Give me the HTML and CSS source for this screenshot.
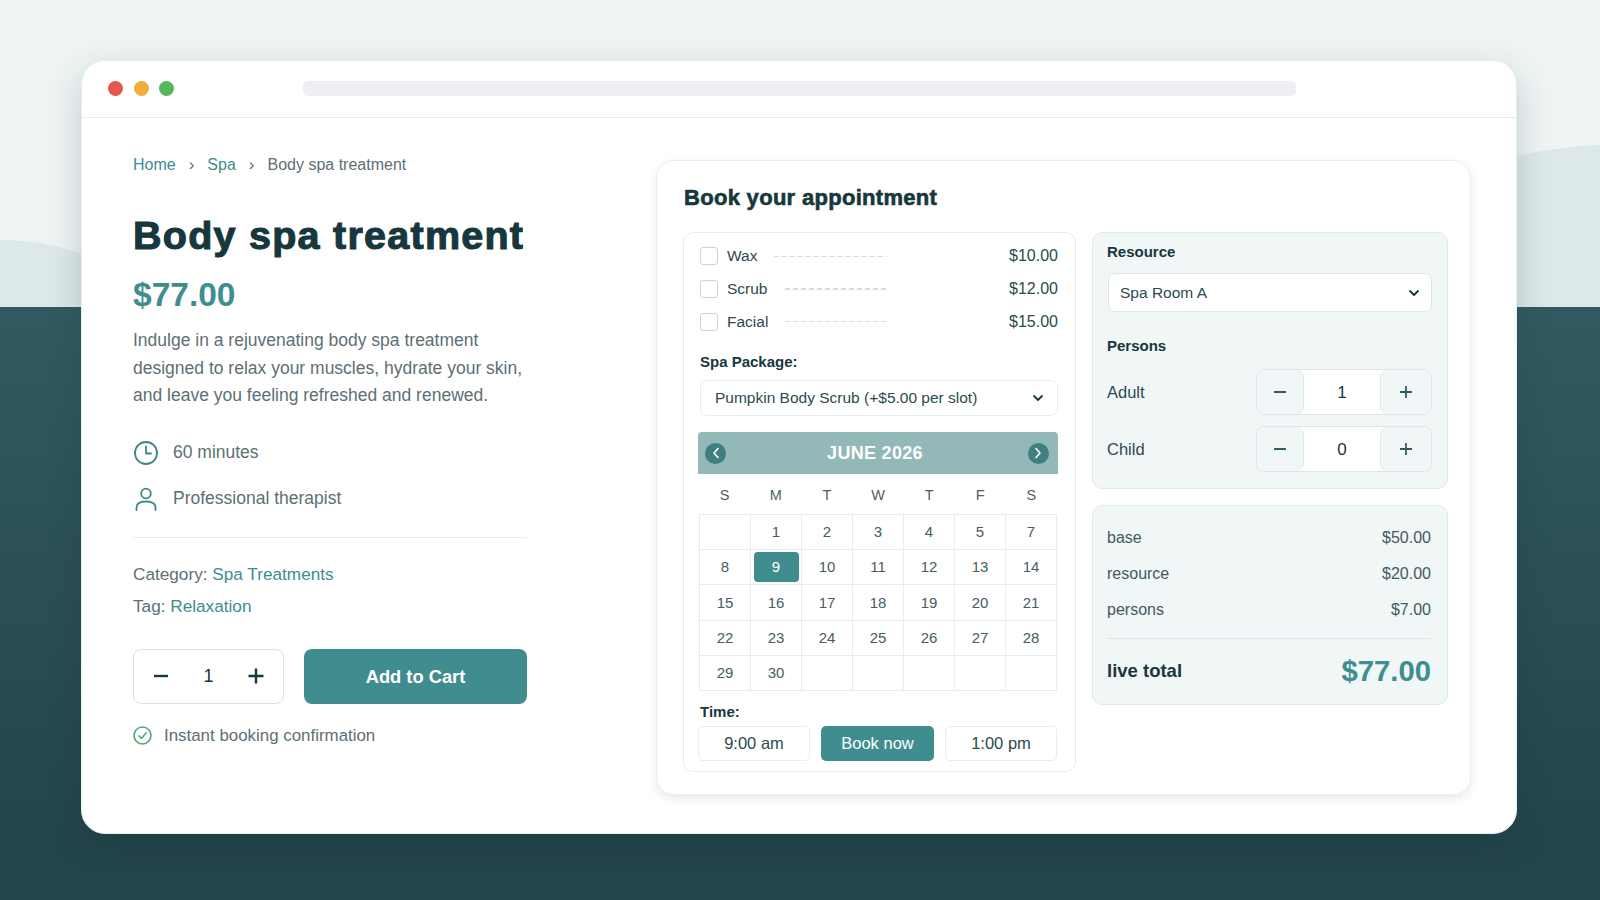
FILE: index.html
```html
<!DOCTYPE html>
<html lang="en">
<head>
    <meta charset="UTF-8">
    <title>Body spa treatment</title>
    <link rel="stylesheet" href="styles.css">
</head>
<body>
    <!-- backdrop hills -->
    <svg class="hills" width="1600" height="307" viewBox="0 0 1600 307">
        <path d="M0 240C40 240 70 248 100 262V307H0Z" fill="#dde8e9"/>
        <path d="M1500 160C1535 151 1570 146 1600 145V307H1500Z" fill="#dde8e9"/>
    </svg>
    <div class="window">
        <div class="titlebar">
            <span class="dot dot-red"></span>
            <span class="dot dot-amber"></span>
            <span class="dot dot-green"></span>
            <div class="urlbar"></div>
        </div>
        <main class="content">
            <section class="product">
                <nav class="crumbs">
                    <a href="#">Home</a>
                    <span class="sep">&#8250;</span>
                    <a href="#">Spa</a>
                    <span class="sep">&#8250;</span>
                    <span>Body spa treatment</span>
                </nav>
                <h1>Body spa treatment</h1>
                <div class="price">$77.00</div>
                <p class="desc">Indulge in a rejuvenating body spa treatment designed to relax your muscles, hydrate your skin, and leave you feeling refreshed and renewed.</p>
                <div class="fact fact-first">
                    <svg width="26" height="26" viewBox="0 0 26 26" fill="none" stroke="#3f8588" stroke-width="1.8" stroke-linecap="round" stroke-linejoin="round"><circle cx="13" cy="13" r="11"/><path d="M13 6.5V13.5H18"/></svg>
                    <span>60 minutes</span>
                </div>
                <div class="fact">
                    <svg width="26" height="26" viewBox="0 0 26 26" fill="none" stroke="#3f8588" stroke-width="1.8" stroke-linecap="round"><circle cx="13" cy="7.5" r="4.8"/><path d="M3.5 24V21.5C3.5 17.5 7 15.5 13 15.5S22.5 17.5 22.5 21.5V24"/></svg>
                    <span>Professional therapist</span>
                </div>
                <hr class="rule">
                <div class="meta">Category: <a href="#">Spa Treatments</a></div>
                <div class="meta">Tag: <a href="#">Relaxation</a></div>
                <div class="buy">
                    <div class="qty">
                        <svg width="16" height="16" viewBox="0 0 16 16" stroke="#17383e" stroke-width="2.4"><path d="M1 8H15"/></svg>
                        <span>1</span>
                        <svg width="16" height="16" viewBox="0 0 16 16" stroke="#17383e" stroke-width="2.4"><path d="M0.5 8H15.5M8 0.5V15.5"/></svg>
                    </div>
                    <button class="add">Add to Cart</button>
                </div>
                <div class="confirm">
                    <svg width="19" height="19" viewBox="0 0 19 19" fill="none" stroke="#4fa874" stroke-width="1.6" stroke-linecap="round" stroke-linejoin="round"><circle cx="9.5" cy="9.5" r="8.5"/><path d="M5.8 9.8L8.4 12.4L13.2 6.8"/></svg>
                    <span>Instant booking confirmation</span>
                </div>
            </section>

            <section class="booking">
                <h2>Book your appointment</h2>
                <div class="booking-cols">
                    <div class="panel-left">
                        <div class="addon"><span class="check"></span><span>Wax</span><i class="dashes"></i><b>$10.00</b></div>
                        <div class="addon"><span class="check"></span><span>Scrub</span><i class="dashes"></i><b>$12.00</b></div>
                        <div class="addon"><span class="check"></span><span>Facial</span><i class="dashes"></i><b>$15.00</b></div>

                        <div class="label label-package">Spa Package:</div>
                        <div class="select select-package">
                            <span>Pumpkin Body Scrub (+$5.00 per slot)</span>
                            <svg width="12" height="8" viewBox="0 0 12 8" fill="none" stroke="#17383e" stroke-width="1.8" stroke-linecap="round" stroke-linejoin="round"><path d="M2 2L6 6L10 2"/></svg>
                        </div>

                        <div class="cal-head">
                            <span class="cal-nav"><svg width="8" height="12" viewBox="0 0 8 12" fill="none" stroke="#fff" stroke-width="1.6" stroke-linecap="round" stroke-linejoin="round"><path d="M6 1.5L2 6L6 10.5"/></svg></span>
                            <span class="cal-title">JUNE 2026</span>
                            <span class="cal-nav"><svg width="8" height="12" viewBox="0 0 8 12" fill="none" stroke="#fff" stroke-width="1.6" stroke-linecap="round" stroke-linejoin="round"><path d="M2 1.5L6 6L2 10.5"/></svg></span>
                        </div>
                        <div class="cal-days">
                            <span>S</span><span>M</span><span>T</span><span>W</span><span>T</span><span>F</span><span>S</span>
                        </div>
                        <div class="cal-grid">
                            <span></span><span>1</span><span>2</span><span>3</span><span>4</span><span>5</span><span>7</span>
                            <span>8</span><span><em class="today">9</em></span><span>10</span><span>11</span><span>12</span><span>13</span><span>14</span>
                            <span>15</span><span>16</span><span>17</span><span>18</span><span>19</span><span>20</span><span>21</span>
                            <span>22</span><span>23</span><span>24</span><span>25</span><span>26</span><span>27</span><span>28</span>
                            <span>29</span><span>30</span><span></span><span></span><span></span><span></span><span></span>
                        </div>

                        <div class="label label-time">Time:</div>
                        <div class="slots">
                            <span class="slot">9:00 am</span>
                            <span class="slot slot-active">Book now</span>
                            <span class="slot">1:00 pm</span>
                        </div>
                    </div>

                    <div class="side">
                        <div class="panel-tint panel-resource">
                            <div class="label">Resource</div>
                            <div class="select select-resource">
                                <span>Spa Room A</span>
                                <svg width="12" height="8" viewBox="0 0 12 8" fill="none" stroke="#17383e" stroke-width="1.8" stroke-linecap="round" stroke-linejoin="round"><path d="M2 2L6 6L10 2"/></svg>
                            </div>
                            <div class="label label-persons">Persons</div>
                            <div class="person">
                                <span>Adult</span>
                                <div class="stepper">
                                    <span class="step"><svg width="14" height="14" viewBox="0 0 14 14" stroke="#2f5e62" stroke-width="1.8"><path d="M1 7H13"/></svg></span>
                                    <span class="step-val">1</span>
                                    <span class="step"><svg width="14" height="14" viewBox="0 0 14 14" stroke="#2f5e62" stroke-width="1.8"><path d="M1 7H13M7 1V13"/></svg></span>
                                </div>
                            </div>
                            <div class="person">
                                <span>Child</span>
                                <div class="stepper">
                                    <span class="step"><svg width="14" height="14" viewBox="0 0 14 14" stroke="#2f5e62" stroke-width="1.8"><path d="M1 7H13"/></svg></span>
                                    <span class="step-val">0</span>
                                    <span class="step"><svg width="14" height="14" viewBox="0 0 14 14" stroke="#2f5e62" stroke-width="1.8"><path d="M1 7H13M7 1V13"/></svg></span>
                                </div>
                            </div>
                        </div>
                        <div class="panel-tint panel-total">
                            <div class="line"><span>base</span><span>$50.00</span></div>
                            <div class="line"><span>resource</span><span>$20.00</span></div>
                            <div class="line"><span>persons</span><span>$7.00</span></div>
                            <div class="total"><span>live total</span><strong>$77.00</strong></div>
                        </div>
                    </div>
                </div>
            </section>
        </main>
    </div>
</body>
</html>
```

FILE: styles.css
```css
:root {
    --teal: #408d8f;
    --ink: #16373d;
    --text: #5d6f75;
    --line: #e6ecef;
    --tint: #f1f6f7;
}
body {
    margin: 0;
    height: 900px;
    overflow: hidden;
    position: relative;
    font-family: "Liberation Sans", Arial, sans-serif;
    color: var(--ink);
    background: linear-gradient(#eef4f4 0, #eef4f4 307px, #315b60 307px, #23444a 850px, #24464c 900px);
}
.hills {
    position: absolute;
    top: 0;
    left: 0;
}
a {
    color: var(--teal);
    text-decoration: none;
}
/* Browser window */
.window {
    position: relative;
    box-sizing: border-box;
    width: 1436px;
    height: 774px;
    margin: 0 0 0 81px;
    top: 60px;
    background: #fff;
    border: 1px solid #e8eef0;
    border-radius: 24px;
    box-shadow: 0 12px 34px rgba(20, 50, 55, 0.2);
}
.titlebar {
    display: flex;
    align-items: center;
    box-sizing: content-box;
    height: 54px;
    padding: 0 0 2px 26px;
    border-bottom: 1px solid var(--line);
}
.dot {
    width: 15px;
    height: 15px;
    border-radius: 50%;
    margin-right: 10.5px;
}
.dot-red { background: #e5574f; }
.dot-amber { background: #f2ae3d; }
.dot-green { background: #56b858; }
.urlbar {
    width: 993px;
    height: 15px;
    margin-left: 118.5px;
    background: #eeeff4;
    border-radius: 5px;
}
.content {
    display: flex;
    padding: 35px 45px 0 51px;
}
/* Left column */
.product {
    width: 394px;
    margin-right: 129px;
}
.crumbs {
    display: flex;
    align-items: center;
    height: 24px;
    font-size: 16px;
    color: var(--text);
}
.crumbs .sep {
    margin: 0 13px;
    font-size: 17px;
}
h1 {
    margin: 34px 0 0 0;
    font-size: 39.5px;
    line-height: 48px;
    letter-spacing: 1.25px;
    -webkit-text-stroke: 1.1px var(--ink);
}
.price {
    margin-top: 16px;
    font-size: 33.5px;
    line-height: 40px;
    font-weight: bold;
    color: var(--teal);
}
.desc {
    margin: 12px 0 0 0;
    font-size: 17.5px;
    line-height: 27.5px;
    color: var(--text);
}
.fact {
    display: flex;
    align-items: center;
    gap: 14px;
    height: 26px;
    margin-top: 20px;
    font-size: 17.5px;
    color: var(--text);
}
.fact-first {
    margin-top: 30px;
}
.rule {
    margin: 25px 0 0 0;
    border: 0;
    border-top: 1px solid var(--line);
}
.meta {
    margin-top: 12px;
    font-size: 17.2px;
    line-height: 20px;
    color: var(--text);
}
.rule + .meta {
    margin-top: 26px;
}
.buy {
    display: flex;
    gap: 20px;
    margin-top: 33px;
}
.qty {
    display: flex;
    align-items: center;
    justify-content: space-between;
    box-sizing: border-box;
    width: 151px;
    height: 55px;
    padding: 0 19px;
    border: 1.5px solid #d9e2e7;
    border-radius: 8px;
    font-size: 18px;
}
.add {
    flex: 1;
    height: 55px;
    padding: 2px 0 0 0;
    border: 0;
    border-radius: 8px;
    background: var(--teal);
    color: #fff;
    font-family: inherit;
    font-size: 18.3px;
    font-weight: bold;
}
.confirm {
    display: flex;
    align-items: center;
    gap: 12px;
    margin-top: 22px;
    font-size: 16.9px;
    color: var(--text);
}
/* Booking card */
.booking {
    box-sizing: border-box;
    width: 815px;
    height: 635px;
    margin-top: 7px;
    padding: 24px 22px 0 27px;
    border: 1px solid var(--line);
    border-radius: 18px;
    box-shadow: 0 4px 10px rgba(20, 50, 55, 0.1);
}
h2 {
    margin: 0;
    font-size: 22px;
    line-height: 26px;
    letter-spacing: 0.3px;
    -webkit-text-stroke: 0.6px var(--ink);
}
.booking-cols {
    display: flex;
    gap: 16px;
    margin: 21px 0 0 -1px;
}
.panel-left {
    box-sizing: border-box;
    width: 393px;
    height: 540px;
    padding: 7px 17px 0 16px;
    border: 1px solid var(--line);
    border-radius: 10px;
}
.addon {
    display: flex;
    align-items: center;
    height: 32.7px;
    font-size: 15.5px;
    color: #2d4a50;
}
.addon b {
    width: 171px;
    font-size: 16px;
    font-weight: normal;
    text-align: right;
}
.check {
    box-sizing: border-box;
    width: 18px;
    height: 18px;
    margin-right: 9px;
    border: 1.5px solid #c9d3d8;
    border-radius: 3px;
}
.dashes {
    flex: 1;
    height: 1.5px;
    margin-left: 17px;
    background: repeating-linear-gradient(90deg, #d5dfe2 0, #d5dfe2 5px, transparent 5px, transparent 8px);
}
.label {
    font-size: 15px;
    font-weight: bold;
    line-height: 18px;
}
.label-package {
    margin-top: 15px;
}
.select {
    display: flex;
    align-items: center;
    justify-content: space-between;
    box-sizing: border-box;
    border: 1px solid var(--line);
    border-radius: 7px;
    background: #fff;
    font-size: 15.5px;
    color: #2d4a50;
}
.select-package {
    width: 358px;
    height: 36px;
    margin-top: 9px;
    padding: 0 13px 0 14px;
}
.cal-head {
    display: flex;
    align-items: center;
    justify-content: space-between;
    width: 360px;
    height: 42px;
    margin: 16px 0 0 -2px;
    padding: 0 9px 0 7px;
    box-sizing: border-box;
    background: #92b8b8;
    border-radius: 4px 4px 0 0;
}
.cal-title {
    margin-right: 4px;
    color: #fff;
    font-size: 18px;
    font-weight: bold;
    letter-spacing: 0.3px;
}
.cal-nav {
    display: flex;
    align-items: center;
    justify-content: center;
    width: 21px;
    height: 21px;
    border-radius: 50%;
    background: #3f7f82;
}
.cal-days {
    display: grid;
    grid-template-columns: repeat(7, 1fr);
    box-sizing: border-box;
    width: 358px;
    height: 40px;
    padding-top: 2px;
    margin-left: -1px;
    align-items: center;
    text-align: center;
    font-size: 14.5px;
    color: #4a5f65;
}
.cal-grid {
    display: grid;
    grid-template-columns: repeat(7, 1fr);
    grid-auto-rows: 35.2px;
    box-sizing: border-box;
    width: 358px;
    margin-left: -1px;
    border-top: 1px solid var(--line);
    border-left: 1px solid var(--line);
    font-size: 15px;
    color: #485c62;
}
.cal-grid span {
    display: flex;
    align-items: center;
    justify-content: center;
    padding-bottom: 1px;
    border-right: 1px solid var(--line);
    border-bottom: 1px solid var(--line);
}
.today {
    display: flex;
    align-items: center;
    justify-content: center;
    width: 45px;
    height: 30px;
    border-radius: 4px;
    background: var(--teal);
    color: #fff;
    font-style: normal;
}
.label-time {
    margin-top: 12px;
}
.slots {
    display: flex;
    justify-content: space-between;
    width: 359px;
    margin: 5px 0 0 -2px;
}
.slot {
    display: flex;
    align-items: center;
    justify-content: center;
    box-sizing: border-box;
    width: 112px;
    height: 35px;
    border: 1px solid var(--line);
    border-radius: 5px;
    font-size: 16.5px;
    color: #2d4a50;
}
.slot-active {
    width: 113px;
    border: 0;
    background: var(--teal);
    color: #fff;
}
/* Side panels */
.side {
    display: flex;
    flex-direction: column;
    gap: 16px;
    width: 357px;
}
.panel-tint {
    box-sizing: border-box;
    padding: 0 16px 0 14px;
    background: var(--tint);
    border: 1px solid #e2eaed;
    border-radius: 10px;
}
.panel-resource {
    height: 257px;
    padding: 10px 15px 0 14px;
}
.select-resource {
    height: 39px;
    margin: 12px 0 0 1px;
    padding: 0 11px;
    border-color: #dde5e9;
}
.label-persons {
    margin-top: 25px;
    margin-bottom: 14px;
}
.person {
    display: flex;
    align-items: center;
    justify-content: space-between;
    margin-bottom: 11px;
    font-size: 16.5px;
    color: #2d4a50;
}
.stepper {
    display: flex;
    box-sizing: border-box;
    width: 176px;
    height: 46px;
    background: #fff;
    border: 1px solid #dde5e9;
    border-radius: 8px;
    overflow: hidden;
    font-size: 17px;
    color: var(--ink);
}
.step {
    display: flex;
    align-items: center;
    justify-content: center;
    width: 46px;
    background: var(--tint);
    border-right: 1px solid #e0e8eb;
    border-radius: 0 8px 8px 0;
}
.step:last-child {
    width: 50px;
    border-right: 0;
    border-left: 1px solid #e0e8eb;
    border-radius: 8px 0 0 8px;
}
.step-val {
    flex: 1;
    display: flex;
    align-items: center;
    justify-content: center;
    padding-top: 1px;
}
.panel-total {
    height: 200px;
    padding-top: 14px;
}
.line {
    display: flex;
    justify-content: space-between;
    height: 36px;
    align-items: center;
    font-size: 16px;
    color: #3f5a60;
}
.total {
    display: flex;
    align-items: center;
    justify-content: space-between;
    height: 64px;
    margin-top: 10px;
    border-top: 1px solid #dde6e9;
    font-size: 18.5px;
    font-weight: bold;
}
.total strong {
    font-size: 29.3px;
    color: var(--teal);
}
```
